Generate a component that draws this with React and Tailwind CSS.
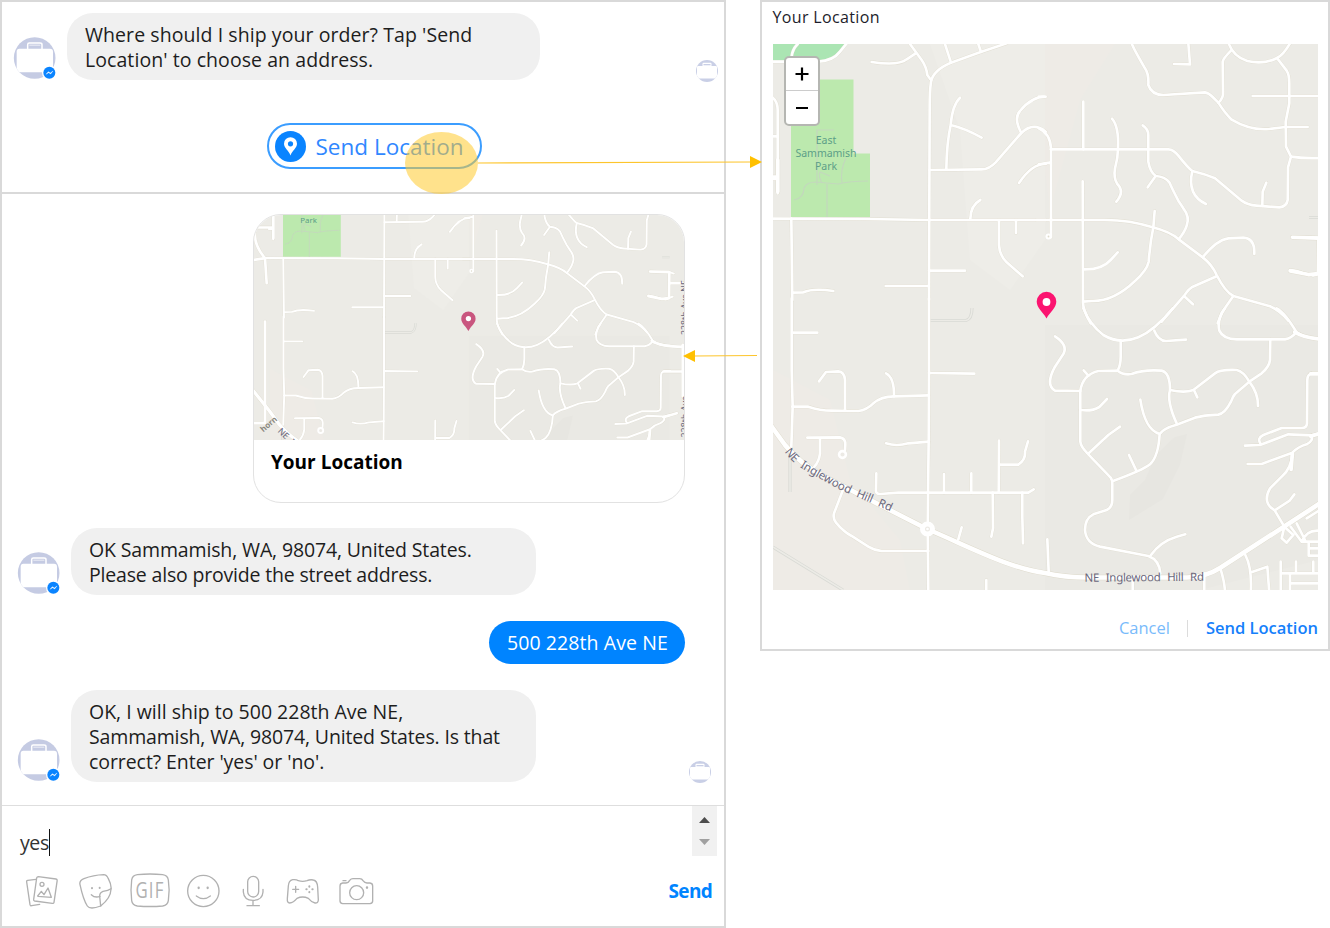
import React from "react";

/* Street geometry, grouped by quadrant. Each quadrant is digitised at 3 units per map pixel. */
const QUADRANTS = [
  {
    transform: "translate(765 0) scale(0.33333)",
    roads: [
      "M80 170 Q82 148 98 132 M0 185 L60 185 M160 185 Q205 182 225 155 L245 130",
      "M22 292 Q38 305 38 330 L38 580 M20 409 L38 409 M20 537 L38 537",
      "M320 186 Q400 198 425 178 L452 160 M435 132 L470 180 Q484 200 487 225 L498 240",
      "M725 130 L645 157 L558 188 Q505 210 498 245 Q494 275 494 320 L492 900",
      "M540 132 L558 188 M640 132 L648 156",
      "M585 293 Q562 315 557 375 Q545 430 544 508 M557 375 Q600 385 650 413",
      "M494 510 L650 508 Q672 508 692 487 L769 399 Q805 365 842 395",
      "M769 399 Q745 355 765 333 Q800 290 842 290 M762 549 Q802 490 842 492",
      "M0 656 L300 657 L492 660 L842 660",
      "M616 656 Q617 616 646 600 M702 660 L702 735 Q703 765 725 787 L773 829 M753 660 L753 699",
      "M492 812 L600 812 M362 858 L492 858",
      "M79 656 L82 900 M82 878 L115 877 Q145 864 205 873",
    ],
  },
  {
    transform: "translate(1040 40) scale(0.33333)",
    roads: [
      "M275 10 Q280 25 315 85 Q327 102 325 135 Q335 165 370 165 L495 157 Q505 158 518 171 L535 188 Q555 220 575 239 Q630 272 688 267 L736 261 L803 261",
      "M535 188 Q551 175 549 155 L548 65 Q550 55 573 32",
      "M566 10 Q580 50 622 63 Q670 75 711 54 Q730 45 750 10",
      "M711 54 L740 92 Q748 105 748 130 L748 190 L737 245 L738 320 L753 350 L744 382 L743 480 Q740 500 718 502 L650 497 Q622 495 605 482 L525 415 Q495 402 457 393 Q445 385 415 347 Q400 328 385 328 L32 328",
      "M445 10 L450 73 L402 72 M638 168 L840 168 M753 350 Q790 356 840 354",
      "M-4 265 Q30 280 33 325 L33 592 M-4 373 L33 367 M-4 170 L12 170",
      "M130 185 L130 328 M216 236 Q237 260 234 325 Q234 355 225 385 Q220 415 232 432 Q255 455 229 485",
      "M308 256 Q325 267 325 285 L325 365 Q330 395 347 408 Q375 410 388 427 Q398 450 415 482 L430 505 Q450 530 440 557 Q435 575 416 598",
      "M347 408 L323 442 M457 393 Q440 465 498 492 M667 498 L668 455 L679 428",
      "M-10 540 L195 540 Q270 540 338 562 Q390 575 416 598 L488 652 Q515 672 530 705 Q555 755 580 768 L690 799 Q720 812 745 842",
      "M128 424 L129 785 Q128 810 152 850 M344 513 L340 562 Q330 610 326 665 Q321 690 285 723 Q220 785 155 783 L130 785",
      "M130 688 Q185 690 212 660 L233 637",
      "M488 652 Q530 600 565 595 L610 593 Q645 595 643 642",
      "M530 709 L455 742 Q445 748 432 768 L365 845 M432 768 L459 793 M580 768 L545 818 L533 850",
      "M760 592 L834 593 L855 600 M834 593 M750 690 Q775 692 790 700 Q820 710 850 695",
    ],
  },
  {
    transform: "translate(765 300) scale(0.33333)",
    roads: [
      "M80 -5 L80 210 L83 320 L79 440 M82 98 L157 98",
      "M492 -5 L492 220 L491 420 L488 687 L490 870",
      "M162 244 L183 216 L220 214 Q238 215 240 240 L240 332 M82 320 L130 320 Q165 332 200 332 L280 333 Q305 330 325 310 Q350 288 390 289 L491 286",
      "M363 220 Q388 232 387 289 M127 413 L225 412 Q242 415 241 435 L240 450 M165 413 L165 460 Q162 485 148 500",
      "M363 430 Q395 440 430 430 L491 425 M492 219 L628 221",
      "M334 520 L333 570 Q332 582 345 582 L400 578 L790 578 L806 568",
      "M537 522 L537 578 M619 520 L619 578 M702 422 L701 578 M702 493 L760 494 Q782 480 780 455 L789 424",
      "M683 578 L684 685 L679 710 M772 578 L772 650 L774 730 M590 682 L580 718",
      "M233 572 L207 640 Q203 655 213 668 Q235 695 260 708 L310 740 Q330 752 350 753 L490 753 M664 840 L664 880",
    ],
  },
  {
    transform: "translate(1040 310) scale(0.33333)",
    roads: [
      "M130 -5 Q150 45 190 75 Q240 105 295 82 Q345 60 398 -5 M343 62 Q355 92 378 93 L438 89",
      "M555 -5 Q530 30 538 62 Q550 88 590 88 L735 88 Q755 85 769 66 Q795 85 840 86 M710 -5 Q735 8 769 66",
      "M242 93 L242 140 Q242 165 233 182 M691 88 L690 150 Q688 170 665 190 L628 215 L585 252 Q578 260 573 275 Q555 310 535 314 L495 317 L465 323 L410 344 Q370 355 359 372",
      "M45 79 Q85 105 70 132 L45 170 Q15 225 45 242 L121 243 Q127 195 175 183 L233 182 Q250 196 275 192 Q310 178 365 182 Q390 188 390 240 Q380 275 410 340",
      "M131 181 L145 197 M390 240 Q435 250 460 240 L525 190 Q540 178 590 180 Q610 184 628 215 Q655 250 654 288 M462 240 L472 262",
      "M121 243 L121 395 Q122 410 145 433 L212 503 Q218 510 217 530 L217 570 Q217 592 200 600 L160 613 Q135 625 135 660 Q138 700 180 710 L325 738 Q358 750 361 790",
      "M121 300 Q155 305 178 291 L201 267 M146 430 L205 375 L240 350 M301 269 Q315 360 359 372 Q355 440 330 463 Q310 480 217 514 M267 435 L290 484",
      "M331 737 Q360 695 410 680 L436 673 M22 688 L26 785",
      "M840 189 L818 189 Q802 192 802 210 L801 340 Q800 354 785 354 L725 354 L670 375 Q650 385 662 402 M615 407 L660 405 L745 373 L815 376 L840 370",
      "M813 376 Q822 392 800 403 Q775 410 757 428 Q755 475 725 500 L690 535 Q670 570 692 592 L704 601 L733 650 M623 462 L665 462 L757 428 M704 601 L748 573 L763 553",
      "M542 778 Q555 820 555 850 M616 735 Q637 775 632 850 M634 787 L682 770 L688 850 M278 810 L278 850 M493 790 L493 850",
      "M722 755 L722 850 M768 755 L768 790 M820 755 L820 790 M722 790 L840 790 M750 790 L750 850 M750 820 L840 820",
      "M733 650 L725 685 L740 698 L760 675 L733 650 M752 650 L785 695 L840 695 M770 640 L795 690 M800 625 L840 600 M785 695 Q800 660 835 662 M806 700 L806 737 L840 737 M806 715 L840 715",
    ],
  },
  {
    transform: "translate(745.95 152.97) scale(0.4554)",
    roads: [
      "M70 15 L70 85 M12 53 L70 53 M15 70 Q12 105 45 145 L50 220 M12 150 L45 145",
      "M45 335 L45 640 M12 640 L45 640",
      "M1200 185 L1258 187 L1257 265 L1245 268 M1258 220 L1300 220 M1257 265 L1235 267 L1195 259",
      "M1205 393 Q1230 410 1300 411 M1300 485 L1240 485 M1298 405 L1298 560 M1240 622 L1280 610 M1200 660 L1197 695",
    ],
  },
];

const MAIN_ROAD =
  "M748 397 L772 427 L785 445 Q800 464 825 477 L927 529 C 968 546, 1008 568, 1045 573 Q1065 577.5 1087 577.5 L1187 577.5 Q1206 577 1220 568 L1322 502";

function Streets() {
  return (
    <g fill="none" strokeLinecap="round" strokeLinejoin="round">
      {QUADRANTS.map((q) => (
        <g key={q.transform} transform={q.transform} stroke="#dedacb" strokeOpacity="0.75">
          {q.roads.map((d) => (
            <path key={d} d={d} strokeWidth="10" />
          ))}
        </g>
      ))}
      <path d={MAIN_ROAD} stroke="#dedacb" strokeWidth="5.4" />
      {QUADRANTS.map((q) => (
        <g key={q.transform} transform={q.transform} stroke="#ffffff">
          {q.roads.map((d) => (
            <path key={d} d={d} strokeWidth="8" />
          ))}
        </g>
      ))}
      <path d={MAIN_ROAD} stroke="#ffffff" strokeWidth="4.6" />
    </g>
  );
}

function MapDrawing({ viewBox, className, large }) {
  return (
    <svg viewBox={viewBox} className={className} preserveAspectRatio="none">
      <rect x="700" y="0" width="700" height="700" fill="#ecebe6" />
      <path d="M773 370 L830 400 L850 480 L900 540 L910 590 L773 590Z M1000 44 H1115 L1080 100 L1050 210 L1040 130Z" fill="#eeebe6" />
      <path d="M930 44 H1045 V240 L1010 290 L970 260 L960 130Z" fill="#eeede8" />
      <path d="M1045 325 H1319 V560 L1200 590 H1045Z" fill="#eae9e4" />
      <path d="M1187 434 L1175 437 L1156 455 L1145 480 L1130 495 L1129 520 L1163 499 L1180 465Z" fill="#e7e6e1" />
      <path d="M773 44 H845 Q835 61 818 61 H773Z" fill="#abe5b3" />
      <path d="M791 79.500 H853.500 V153.500 H870 V217 H791Z" fill="#bce9ae" />
      <g fill="none" stroke="#c3d8bd" strokeWidth="1.2">
        <path d="M794 200 Q804 198 804 188 Q807 182 815 182 L838 184 Q850 181 868 181 M827 184 V217 M817 185 V130 H834 M842 183 Q840 170 846 158 M822 183 Q818 176 820 172 L830 176" />
      </g>
      <g fill="none" stroke="#d9dad5" strokeWidth="3.2">
        <path d="M930 320.500 H966 Q972 319 972 308 M790 447 V492 M773 547 L843 590 M1309 217.500 H1319" />
      </g>
      <g fill="none" stroke="#ecebe6" strokeWidth="1.500">
        <path d="M930 320.500 H966 Q972 319 972 308 M790 447 V492 M773 547 L843 590 M1309 217.500 H1319" />
      </g>
      <Streets />
      <circle cx="1048.500" cy="236.500" r="3" fill="#fff" />
      <circle cx="1048.500" cy="236.500" r="0.900" fill="#dedacb" />
      <circle cx="842.500" cy="454.500" r="3.400" fill="#eceae5" stroke="#fff" strokeWidth="2.600" />
      <circle cx="927.500" cy="529" r="5" fill="#eceae5" stroke="#fff" strokeWidth="5" />
      <circle cx="927.500" cy="529" r="1.300" fill="#fff" />
      <g fill="#5c9f88" fontSize="10.5" textAnchor="middle" className="font-['Noto_Sans',sans-serif]">
        {large && <text x="826" y="144">East</text>}
        {large && <text x="826" y="157" textLength="61">Sammamish</text>}
        <text x="826" y={large ? 170 : 170.500} fontSize={large ? 10.5 : 10.8}>Park</text>
      </g>
      {large ? (
        <g fill="#6a677c" fontSize="11.5" wordSpacing="4" className="font-['Noto_Sans',sans-serif]">
          <path id="hill-road" d="M784.500 451.500 C 790 460, 796 465, 803 469 S 835 488, 852 495 S 880 506.500, 900 516" fill="none" />
          <text textLength="123" lengthAdjust="spacing">
            <textPath href="#hill-road">NE Inglewood Hill Rd</textPath>
          </text>
          <text x="1084.500" y="581.300" textLength="119.500" transform="rotate(-0.5 1144 580)">
            NE Inglewood Hill Rd
          </text>
        </g>
      ) : (
        <g fill="#67657a" fontSize="12" className="font-['Noto_Sans',sans-serif]">
          <text transform="translate(783 456) rotate(44)">NE&#160;&#160;In</text>
          <text transform="translate(764 457) rotate(-40)" fill="#8a887f" fontWeight="700" fontSize="11">horn</text>
          <text transform="translate(1344.500 324) rotate(-90)" textLength="75">228th Ave NE</text>
          <text transform="translate(1344.500 464) rotate(-90)" textLength="57">228th Ave</text>
        </g>
      )}
      {large && (
        <g>
          <path d="M1046.500 318.500 C 1043 312 1036.700 308 1036.700 301.600 A9.800 9.800 0 0 1 1056.300 301.600 C1056.300 308 1050 312 1046.500 318.500Z" fill="#fb1470" />
          <circle cx="1046.500" cy="302" r="3.900" fill="#fff" />
        </g>
      )}
      {!large && (
        <g>
          <path d="M1044.300 318.500 C 1041 312 1034.500 308 1034.500 301.600 A9.800 9.800 0 0 1 1054.100 301.600 C1054.100 308 1047.300 312 1044.300 318.500Z" fill="#c9567f" />
          <circle cx="1044.300" cy="301.500" r="3.600" fill="#fff" />
        </g>
      )}
    </svg>
  );
}

function Avatar({ className }) {
  return (
    <svg viewBox="39 109 132 132" className={className} aria-hidden="true">
      <clipPath id="avatar-round">
        <circle cx="104" cy="175" r="62.500" />
      </clipPath>
      <g clipPath="url(#avatar-round)">
        <rect x="39" y="109" width="132" height="132" fill="#c5cbe3" />
        <path d="M50 156 Q50 147 58 147 H150 Q159 147 159 156 V208 Q159 218 150 218 H58 Q50 218 50 208Z" fill="#fff" />
        <path d="M83 148 V135 Q83 130 88 130 H120 Q126 130 126 135 V148" fill="none" stroke="#fff" strokeWidth="4.500" />
        <path d="M88 136.500 H121" stroke="#fff" strokeWidth="3" strokeOpacity="0.700" />
      </g>
      <circle cx="148" cy="219" r="22" fill="#fff" />
      <circle cx="148" cy="219" r="18" fill="#0a84ff" />
      <path d="M138 224 L145 216 L151 220 L159 214 L152 223 L146 219Z" fill="#fff" stroke="#fff" strokeWidth="1" />
    </svg>
  );
}

function SeenAvatar({ className }) {
  return (
    <svg viewBox="0 0 22 22" className={className} aria-hidden="true">
      <clipPath id="seen-round">
        <circle cx="11" cy="11" r="11" />
      </clipPath>
      <g clipPath="url(#seen-round)">
        <rect width="22" height="22" fill="#c9cfe6" />
        <path d="M1 7 Q1 6 2 6 H6.500 V3.700 Q6.500 2.700 7.500 2.700 H14.500 Q15.500 2.700 15.500 3.700 V6 H20 Q21 6 21 7 V17.500 Q21 18.600 20 18.600 H2 Q1 18.600 1 17.500Z" fill="#fff" />
        <rect x="7.500" y="4" width="7" height="1.300" fill="#c9cfe6" />
      </g>
    </svg>
  );
}

function Toolbar() {
  return (
    <div className="flex h-[38px] items-start text-[#b1b1b1] [&_svg]:h-[38px] [&_svg]:shrink-0 [&_svg]:fill-none [&_svg]:stroke-current [&_svg]:stroke-[4px] [&_svg]:[stroke-linecap:round] [&_svg]:[stroke-linejoin:round]">
      <svg viewBox="75 216 102 114" className="w-[34px]">
        <path d="M115 230 L168 237 Q172 238 171.500 242 L162 307 Q161 311 157 310 L104 303 Q100 302 101 298 L110 234 Q111 230 115 230Z" />
        <path d="M108 238 L83 241 Q79 242 80 246 L90 314 Q91 318 95 317 L119 313" />
        <circle cx="126" cy="253" r="6" />
        <path d="M113 288 L124 274 L132 284 L144 264 L154 292 L114 289" />
      </svg>
      <svg viewBox="231 216 108 114" className="ml-[18px] w-[36px]">
        <path d="M302 318 Q270 330 262 318 Q250 300 240 254 Q237 242 252 236 Q280 225 311 224 Q320 224 325 236 Q335 255 333 268 Q332 295 302 318Z" />
        <path d="M302 318 L299 288 Q299 278 309 274 Q325 272 333 266" />
        <path d="M274 284 Q285 295 300 289" />
        <path d="M276 264 V265 M299 263 V264" strokeWidth="6" />
      </svg>
      <div className="relative ml-[16px] h-[38px] w-[42px]">
        <svg viewBox="387 216 126 114" className="w-[42px]">
          <path d="M412 224 Q450 220 488 224 Q503 226 505 240 Q510 270 505 302 Q503 316 488 318 Q450 321 412 318 Q397 316 395 302 Q391 270 395 240 Q397 226 412 224Z" />
        </svg>
        <span className="absolute inset-x-0 top-[4.500px] origin-center scale-x-[0.78] text-center font-['Open_Sans',sans-serif] text-[21.500px] leading-[26px] font-normal tracking-[1.500px] text-[#b1b1b1]">GIF</span>
      </div>
      <svg viewBox="555 216 108 114" className="ml-[14px] w-[36px]">
        <circle cx="610" cy="273" r="47" />
        <path d="M589 288 Q610 304 631 288" />
        <path d="M596 263 V264 M623 263 V264" strokeWidth="7" />
      </svg>
      <svg viewBox="723 216 72 114" className="ml-[20px] w-[24px]">
        <rect x="743" y="229" width="33" height="62" rx="16.500" />
        <path d="M730 268 V276 Q732 301 759 301 Q787 301 789 276 V268 M759 301 V317 M741 317 H778" />
      </svg>
      <svg viewBox="855 216 105 114" className="ml-[20px] w-[35px]">
        <path d="M878 239 Q890 238 895 242 Q908 246 921 242 Q930 238 940 240 Q952 242 953 262 L955 300 Q954 310 945 309 Q935 307 925 295 Q908 287 891 295 Q880 308 869 309 Q861 309 862 296 L865 258 Q866 242 878 239Z" />
        <path d="M887 259 V277 M878 268 H896" />
        <path d="M928 259 V260 M928 276 V277 M919 268 H920 M937 268 H938" strokeWidth="6" />
      </svg>
      <svg viewBox="1014 216 111 114" className="ml-[18px] w-[37px]">
        <path d="M1028 249 H1038 Q1045 249 1049 241 Q1053 236 1059 236 H1079 Q1086 236 1089 242 Q1094 249 1101 249 H1110 Q1118 250 1118 258 V303 Q1118 310 1110 311 H1028 Q1020 310 1020 303 V258 Q1020 250 1028 249Z M1029 242 H1038" />
        <circle cx="1070" cy="278" r="21" />
        <path d="M1101 262 V263" strokeWidth="7" />
      </svg>
    </div>
  );
}

function Bubble({ className, children }) {
  return (
    <div className={`rounded-[26px] bg-[#f0f0f0] pt-[8.500px] pl-[18px] whitespace-nowrap text-[#1d1d1d] text-[19.500px] leading-[25px] ${className}`}>
      {children}
    </div>
  );
}

function ChatPanel() {
  return (
    <section className="flex h-[928px] w-[726px] shrink-0 flex-col border-2 border-[#d9d9d9] bg-white">
      <div className="flex h-[192px] flex-col border-b-2 border-[#d9d9d9]">
        <div className="flex pt-[11px] pl-[11px]">
          <Avatar className="mt-[23px] h-[44px] w-[44px]" />
          <Bubble className="ml-[10px] h-[67px] w-[473px]">
            <p className="tracking-[0.070px]">Where should I ship your order? Tap 'Send</p>
            <p className="tracking-[0.070px]">Location' to choose an address.</p>
          </Bubble>
          <SeenAvatar className="mt-[47px] ml-[156px] h-[22px] w-[22px]" />
        </div>
        <button className="mt-[41px] ml-[265px] flex h-[46px] w-[215px] shrink-0 items-center rounded-full border-2 border-[#0a84ff]/80 pl-[6px] text-[#2f87ff]">
          <svg viewBox="0 0 31 31" className="h-[31px] w-[31px]">
            <circle cx="15.500" cy="15.500" r="15.500" fill="#0a84ff" />
            <path d="M15.500 24.500 C14 19.500 9 17 9 12.700 A6.500 6.500 0 0 1 22 12.700 C22 17 17 19.500 15.500 24.500Z" fill="#fff" />
            <circle cx="15.500" cy="12.800" r="2.600" fill="#0a84ff" />
          </svg>
          <span className="mt-[2px] ml-[9.500px] text-[22.500px] leading-[30px] whitespace-nowrap">Send Location</span>
        </button>
      </div>

      <div className="flex h-[611px] flex-col">
        <div className="mt-[20px] ml-[251px] h-[289px] w-[432px] overflow-hidden rounded-[28px] border border-[#e2e2e2]">
          <MapDrawing viewBox="751.400 160 587.400 307.400" className="h-[225px] w-[430px]" />
          <h2 className="mt-[9px] ml-[17px] text-[19px] leading-[26px] font-bold whitespace-nowrap text-black">Your Location</h2>
        </div>
        <div className="mt-[25px] flex pl-[15px]">
          <Avatar className="mt-[23px] h-[44px] w-[44px]" />
          <Bubble className="ml-[10px] h-[67px] w-[465px]">
            <p className="tracking-[-0.140px]">OK Sammamish, WA, 98074, United States.</p>
            <p className="tracking-[-0.180px]">Please also provide the street address.</p>
          </Bubble>
        </div>
        <div className="mt-[26px] ml-[487px] h-[43px] w-[196px] rounded-full bg-[#0084ff] pt-[9px] pl-[18px] text-[19.500px] leading-[26px] tracking-[0.080px] whitespace-nowrap text-white">
          500 228th Ave NE
        </div>
        <div className="mt-[26px] flex pl-[15px]">
          <Avatar className="mt-[48px] h-[44px] w-[44px]" />
          <Bubble className="ml-[10px] h-[92px] w-[465px]">
            <p>OK, I will ship to 500 228th Ave NE,</p>
            <p className="tracking-[-0.150px]">Sammamish, WA, 98074, United States. Is that</p>
            <p className="tracking-[-0.070px]">correct? Enter 'yes' or 'no'.</p>
          </Bubble>
          <SeenAvatar className="mt-[71px] ml-[153px] h-[22px] w-[22px]" />
        </div>
      </div>

      <div className="flex grow flex-col border-t-[1.500px] border-[#dedede]">
        <div className="flex h-[51px] justify-between">
          <div className="mt-[23px] ml-[18px] flex items-start text-[19.500px] leading-[28px] text-[#333]">
            <span className="tracking-[-0.400px]">yes</span>
            <span className="h-[27px] w-[1.500px] bg-[#111]" />
          </div>
          <div className="mr-[7px] flex h-[50px] w-[25px] flex-col items-center justify-between bg-[#f1f1f1] py-[11px]">
            <svg viewBox="0 0 11 6" className="h-[6px] w-[11px]"><path d="M0 6 L5.500 0 L11 6Z" fill="#4d4d4d" /></svg>
            <svg viewBox="0 0 11 6" className="h-[6px] w-[11px]"><path d="M0 0 L5.500 6 L11 0Z" fill="#a0a0a0" /></svg>
          </div>
        </div>
        <div className="mt-[15px] flex justify-between pr-[12px] pl-[23px]">
          <Toolbar />
          <button className="mt-[5px] h-[28px] text-[19px] leading-[28px] font-bold tracking-[-0.700px] text-[#0084ff]">Send</button>
        </div>
      </div>
    </section>
  );
}

function LocationDialog() {
  return (
    <section className="h-[651px] w-[570px] shrink-0 border-2 border-[#d9d9d9] bg-white">
      <h1 className="mt-[3px] ml-[10.500px] text-[16px] leading-[24px] font-medium tracking-[0.350px] whitespace-nowrap text-[#1d1d2b]">Your Location</h1>
      <div className="relative mt-[15px] ml-[11px] h-[546px] w-[545px]">
        <MapDrawing large viewBox="773 44 545 546" className="h-[546px] w-[545px]" />
        <div className="absolute top-[12px] left-[11px] flex h-[70px] w-[36px] flex-col overflow-hidden rounded-[5px] border-2 border-[#b5b6b2] bg-white">
          <button className="flex h-[33px] items-center justify-center border-b border-[#ccc]">
            <svg viewBox="0 0 14 14" className="h-[14px] w-[14px]"><path d="M7 0.500 V13.500 M0.500 7 H13.500" stroke="#000" strokeWidth="2.200" /></svg>
          </button>
          <button className="flex h-[33px] items-center justify-center">
            <svg viewBox="0 0 14 14" className="h-[14px] w-[14px]"><path d="M1 7 H13" stroke="#000" strokeWidth="2.200" /></svg>
          </button>
        </div>
      </div>
      <div className="mt-[24px] mr-[10px] flex h-[28px] items-center justify-end text-[16.500px] leading-[28px] whitespace-nowrap">
        <button className="text-[#79bbfb]">Cancel</button>
        <span className="mx-[17.500px] h-[17px] w-px bg-[#dcdcdc]" />
        <button className="font-semibold text-[#1580fb]">Send Location</button>
      </div>
    </section>
  );
}

export default function App() {
  return (
    <main className="relative flex h-[928px] w-[1330px] items-start justify-between overflow-hidden bg-white font-['Open_Sans',sans-serif]">
      <ChatPanel />
      <LocationDialog />
      <div className="absolute top-[132px] left-[405px] h-[62px] w-[73px] rounded-[50%] bg-[#ffcb2e]/55" />
      <svg viewBox="0 0 290 14" className="absolute top-[155px] left-[475px] h-[14px] w-[290px]">
        <path d="M3 8 L276 7" stroke="#fdc52c" strokeWidth="1.200" />
        <path d="M275 1 L287 7 L275 13Z" fill="#ffc000" />
      </svg>
      <svg viewBox="0 0 80 14" className="absolute top-[349px] left-[680px] h-[14px] w-[80px]">
        <path d="M77 6.500 L14 7" stroke="#fdc52c" strokeWidth="1.200" />
        <path d="M15 1 L3 7 L15 13Z" fill="#ffc000" />
      </svg>
    </main>
  );
}
